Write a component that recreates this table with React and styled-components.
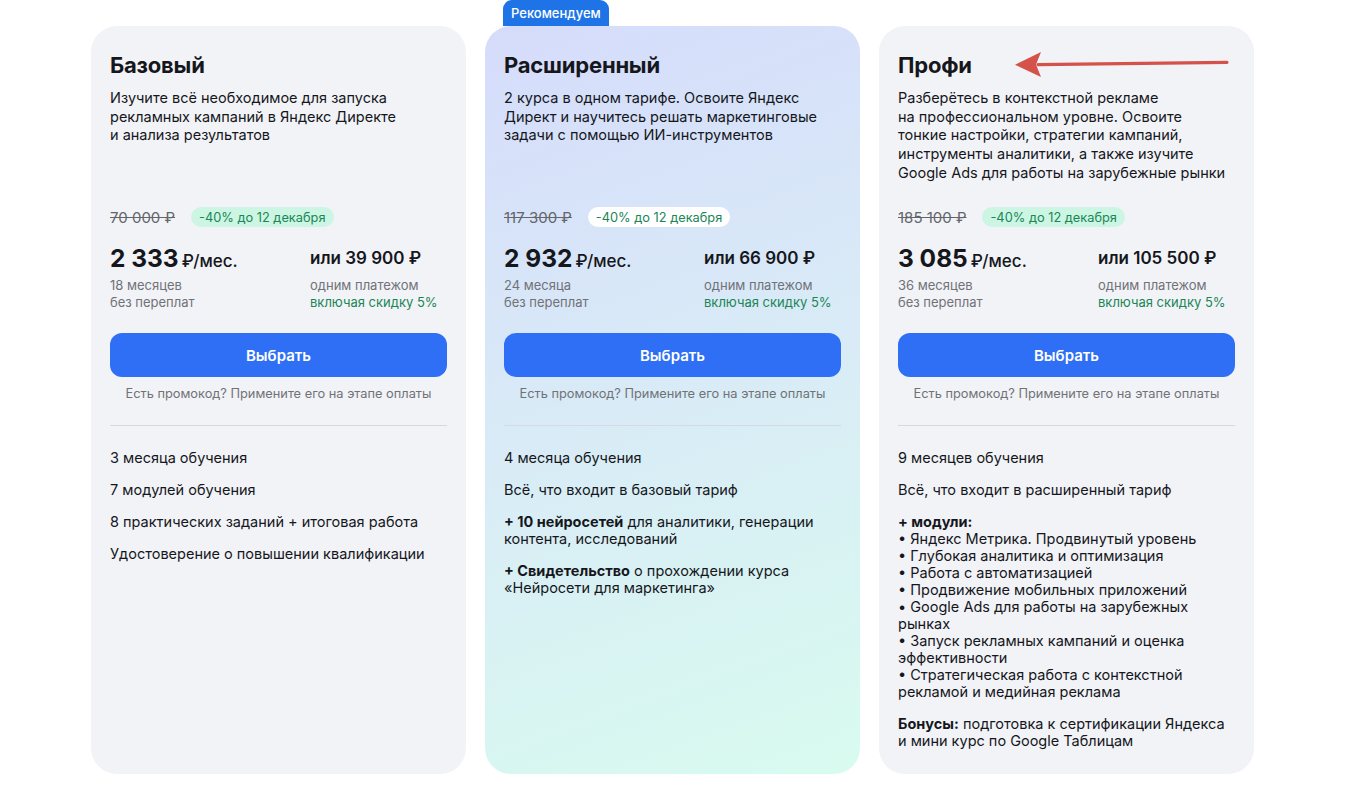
import styled, { createGlobalStyle } from 'styled-components'

const GlobalStyle = createGlobalStyle`
    body {
        margin: 0;
        background: #ffffff;
        font-family: Inter, "Noto Sans", "Liberation Sans", sans-serif;
        color: #15171c;
    }
`

const StyledPage = styled.div`
    position: relative;
    display: flex;
    flex-direction: row;
    gap: 19px;
    padding: 26px 0 18px 91px;
`

const StyledCard = styled.div`
    position: relative;
    display: flex;
    flex-direction: column;
    width: 375px;
    height: 748px;
    box-sizing: border-box;
    padding: 25px 19px;
    border-radius: 26px;
    background: ${props => props.$featured
        ? 'linear-gradient(160deg, #d5dcfb 0%, #d9eaf7 45%, #d8fbef 100%)'
        : '#f2f3f7'};
`

const StyledRibbon = styled.div`
    position: absolute;
    top: -26px;
    left: 18px;
    height: 26px;
    padding: 0 8px;
    display: flex;
    align-items: center;
    border-radius: 9px 9px 0 0;
    background: #1e74e6;
    color: #ffffff;
    font-size: 13px;
    font-weight: 500;
`

const StyledTitle = styled.h2`
    margin: 0;
    font-size: 22px;
    line-height: 28px;
    font-weight: 700;
    letter-spacing: -0.2px;
`

const StyledDesc = styled.p`
    margin: 10px 0 0;
    min-height: 94px;
    font-size: 14.5px;
    line-height: 18.7px;
`

const StyledOldRow = styled.div`
    display: flex;
    align-items: center;
    gap: 16px;
    margin-top: 24px;
    height: 20px;
`

const StyledOldPrice = styled.span`
    font-size: 15px;
    color: #63656b;
    text-decoration: line-through;
`

const StyledSale = styled.span`
    height: 20px;
    padding: 0 8px;
    display: flex;
    align-items: center;
    border-radius: 10px;
    font-size: 12.8px;
    color: #1a8656;
    background: ${props => props.$light ? '#ffffff' : '#ccf6e3'};
`

const StyledPriceGrid = styled.div`
    display: grid;
    grid-template-columns: 200px 1fr;
    margin-top: 16px;
`

const StyledPrice = styled.div`
    display: flex;
    align-items: baseline;
    gap: 3px;
    height: 30px;
    font-size: 17px;
    font-weight: 500;

    b {
        font-size: 24.5px;
        font-weight: 700;
    }
`

const StyledOnce = styled.div`
    display: flex;
    align-items: center;
    height: 30px;
    font-size: 17px;
    font-weight: 600;
`

const StyledNote = styled.div`
    margin-top: 4px;
    font-size: 13px;
    line-height: 17px;
    color: #707277;

    span {
        display: block;
        color: ${props => props.$green ? '#1a8656' : '#707277'};
    }
`

const StyledButton = styled.button`
    margin-top: 22px;
    height: 44px;
    border: none;
    border-radius: 12px;
    background: #2e6ff6;
    color: #ffffff;
    font-family: inherit;
    font-size: 15px;
    font-weight: 600;
    cursor: pointer;
`

const StyledPromo = styled.div`
    margin-top: 9px;
    text-align: center;
    font-size: 12.8px;
    line-height: 16px;
    color: #707277;
`

const StyledDivider = styled.hr`
    margin: 23px 0 0;
    border: none;
    border-top: 1px solid #d7d9de;
`

const StyledFeatures = styled.ul`
    display: flex;
    flex-direction: column;
    gap: 15px;
    margin: 23px 0 0;
    padding: 0;
    list-style-type: none;
`

const StyledFeature = styled.li`
    font-size: 14.5px;
    line-height: 17px;

    b {
        font-weight: 700;
    }
`

const StyledArrow = styled.svg`
    position: absolute;
    left: 1012px;
    top: 50px;
`

const plans = [
    {
        title: 'Базовый',
        desc: <>Изучите всё необходимое для запуска<br />рекламных кампаний в Яндекс Директе<br />и анализа результатов</>,
        old: '70 000 ₽',
        price: '2 333',
        once: 'или 39 900 ₽',
        months: '18 месяцев',
        features: [
            '3 месяца обучения',
            '7 модулей обучения',
            '8 практических заданий + итоговая работа',
            'Удостоверение о повышении квалификации',
        ],
    },
    {
        title: 'Расширенный',
        featured: true,
        desc: <>2 курса в одном тарифе. Освоите Яндекс<br />Директ и научитесь решать маркетинговые<br />задачи с помощью ИИ-инструментов</>,
        old: '117 300 ₽',
        price: '2 932',
        once: 'или 66 900 ₽',
        months: '24 месяца',
        features: [
            '4 месяца обучения',
            'Всё, что входит в базовый тариф',
            <><b>+ 10 нейросетей</b> для аналитики, генерации<br />контента, исследований</>,
            <><b>+ Свидетельство</b> о прохождении курса<br />«Нейросети для маркетинга»</>,
        ],
    },
    {
        title: 'Профи',
        desc: <>Разберётесь в контекстной рекламе<br />на профессиональном уровне. Освоите<br />тонкие настройки, стратегии кампаний,<br />инструменты аналитики, а также изучите<br />Google Ads для работы на зарубежные рынки</>,
        old: '185 100 ₽',
        price: '3 085',
        once: 'или 105 500 ₽',
        months: '36 месяцев',
        features: [
            '9 месяцев обучения',
            'Всё, что входит в расширенный тариф',
            <><b>+ модули:</b><br />
                • Яндекс Метрика. Продвинутый уровень<br />
                • Глубокая аналитика и оптимизация<br />
                • Работа с автоматизацией<br />
                • Продвижение мобильных приложений<br />
                • Google Ads для работы на зарубежных<br />рынках<br />
                • Запуск рекламных кампаний и оценка<br />эффективности<br />
                • Стратегическая работа с контекстной<br />рекламой и медийная реклама</>,
            <><b>Бонусы:</b> подготовка к сертификации Яндекса<br />и мини курс по Google Таблицам</>,
        ],
    },
]

const Plan = ({ plan }) => (
    <StyledCard $featured={plan.featured}>
        {plan.featured && <StyledRibbon>Рекомендуем</StyledRibbon>}
        <StyledTitle>{plan.title}</StyledTitle>
        <StyledDesc>{plan.desc}</StyledDesc>
        <StyledOldRow>
            <StyledOldPrice>{plan.old}</StyledOldPrice>
            <StyledSale $light={plan.featured}>-40% до 12 декабря</StyledSale>
        </StyledOldRow>
        <StyledPriceGrid>
            <StyledPrice><b>{plan.price}</b>₽/мес.</StyledPrice>
            <StyledOnce>{plan.once}</StyledOnce>
            <StyledNote>
                <span>{plan.months}</span>
                <span>без переплат</span>
            </StyledNote>
            <StyledNote $green>
                одним платежом
                <span>включая скидку 5%</span>
            </StyledNote>
        </StyledPriceGrid>
        <StyledButton>Выбрать</StyledButton>
        <StyledPromo>Есть промокод? Примените его на этапе оплаты</StyledPromo>
        <StyledDivider />
        <StyledFeatures>
            {plan.features.map((f, index) => (
                <StyledFeature key={index}>{f}</StyledFeature>
            ))}
        </StyledFeatures>
    </StyledCard>
)

const App = () => (
    <>
        <GlobalStyle />
        <StyledPage>
            {plans.map(plan => (
                <Plan key={plan.title} plan={plan} />
            ))}
            {/* annotation arrow */}
            <StyledArrow width="220" height="30" viewBox="0 0 220 30">
                <path d="M26 14.6 L215 12.3" stroke="#d5524a" strokeWidth="3.2" strokeLinecap="round" fill="none" />
                <path d="M3 14.8 L29 2 L24 14.6 L29 27 Z" fill="#d5524a" />
            </StyledArrow>
        </StyledPage>
    </>
)

export default App
